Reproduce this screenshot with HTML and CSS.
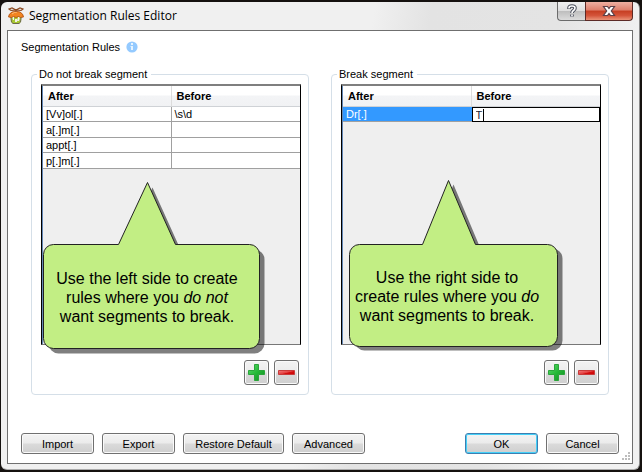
FILE: index.html
```html
<!DOCTYPE html>
<html lang="en">
<head>
<meta charset="utf-8">
<title>Segmentation Rules Editor</title>
<link rel="stylesheet" href="styles.css">
</head>
<body>
<div class="window">
  <header class="titlebar">
    <svg class="app-icon" width="16" height="18" viewBox="0 0 16 18" aria-hidden="true">
      <path d="M3 8h10v4q0 4-2 4.500H5q-2-.5-2-4.500z" fill="#a8c832" stroke="#6d6a4a"/>
      <path d="M4 9h2v4H5zM10 10h2l-1 4h-2zM7 12h2v3H7z" fill="#f3f3e6"/>
      <path d="M.5 10q0-3 3.500-5 4-1.500 8 0 3.500 2 3.500 5l-3 .5-2-1-2.500 1-2.500-1-2 1z" fill="#f28420" stroke="#a84c10" stroke-width=".8"/>
      <path d="M4 7q2-2 5-2" stroke="#ffc078" fill="none"/>
      <path d="M8 3L4 1 1 2l2 1.500M8 3l4-2 3 1-2 1.500M3 3.500l5-.5 5 .5M8 2v3" stroke="#8c4a22" fill="none" stroke-width="1.2"/>
    </svg>
    <h1 class="title">Segmentation Rules Editor</h1>
    <div class="window-controls">
      <button class="control help" type="button" aria-label="Help">
        <svg width="12" height="14" viewBox="0 0 12 14" aria-hidden="true">
          <path d="M3 5V4q0-2 3-2t3 2q0 1.500-1.500 2.500T6 9M6 10.500v2" fill="none" stroke="#4b4f5c" stroke-width="3.600"/>
          <path d="M3 4.500V4q0-2 3-2t3 2q0 1.500-1.500 2.500T6 9M6 10.500v1.700" fill="none" stroke="#fff" stroke-width="1.600"/>
        </svg>
      </button>
      <button class="control close" type="button" aria-label="Close">
        <svg width="14" height="12" viewBox="0 0 14 12" aria-hidden="true">
          <path d="M1.500 1.500h4L7 3.500l1.500-2h4L9.300 6l3.200 4.500h-4L7 8.500l-1.500 2h-4L4.700 6z" fill="#fff" stroke="#5a4048" stroke-width="1.200"/>
        </svg>
      </button>
    </div>
  </header>

  <main class="client">
    <div class="heading">
      <h2 class="heading-text">Segmentation Rules</h2>
      <svg width="12" height="12" viewBox="0 0 12 12" role="img" aria-label="Information">
        <circle cx="6" cy="6" r="5.600" fill="#94caff"/>
        <path d="M5 2h2v2H5zM4.500 5H7v4h-2V6h-.5z" fill="#e6f4ff"/>
      </svg>
    </div>

    <div class="groups">
      <fieldset class="group">
        <legend>Do not break segment</legend>
        <div class="grid">
          <table>
            <thead><tr><th scope="col">After</th><th scope="col">Before</th></tr></thead>
            <tbody>
              <tr><td>[Vv]ol[.]</td><td>\s\d</td></tr>
              <tr><td>a[.]m[.]</td><td></td></tr>
              <tr><td>appt[.]</td><td></td></tr>
              <tr><td>p[.]m[.]</td><td></td></tr>
            </tbody>
          </table>
          <div class="callout callout-left">
            <svg class="bubble" width="222" height="173" viewBox="0 0 222 173" aria-hidden="true">
              <path class="shadow" transform="translate(5 5)" d="M10.500 62.500H75.500L104.500.5L132.500 62.500H206.500a10 10 0 0 1 10 10V156.500a10 10 0 0 1-10 10H10.500a10 10 0 0 1-10-10V72.500a10 10 0 0 1 10-10z"/>
              <path class="shape" d="M10.500 62.500H75.500L104.500.5L132.500 62.500H206.500a10 10 0 0 1 10 10V156.500a10 10 0 0 1-10 10H10.500a10 10 0 0 1-10-10V72.500a10 10 0 0 1 10-10z"/>
            </svg>
            <p>Use the left side to create<br>rules where you <em>do not</em><br>want segments to break.</p>
          </div>
        </div>
        <div class="row-actions">
          <button class="button square" type="button" aria-label="Add rule">
            <svg width="19" height="19" viewBox="0 0 19 19" aria-hidden="true"><defs><linearGradient id="green" x2="1" y2="1"><stop offset="0" stop-color="#5fdc70"/><stop offset=".5" stop-color="#25b937"/><stop offset="1" stop-color="#128c22"/></linearGradient></defs><path d="M7.500 1.500h4v6h6v4h-6v6h-4v-6h-6v-4h6z" fill="url(#green)" stroke="#2ba53a"/></svg>
          </button>
          <button class="button square" type="button" aria-label="Remove rule">
            <svg width="19" height="19" viewBox="0 0 19 19" aria-hidden="true"><defs><linearGradient id="red" x2="1" y2="1"><stop offset="0" stop-color="#f58080"/><stop offset=".5" stop-color="#e34040"/><stop offset=".6" stop-color="#d41111"/><stop offset="1" stop-color="#c00"/></linearGradient></defs><path d="M1.500 7.500h16v4h-16z" fill="url(#red)" stroke="#c83c3c"/></svg>
          </button>
        </div>
      </fieldset>

      <fieldset class="group">
        <legend>Break segment</legend>
        <div class="grid">
          <table>
            <thead><tr><th scope="col">After</th><th scope="col">Before</th></tr></thead>
            <tbody>
              <tr><td class="selected">Dr[.]</td><td class="editing"><input type="text" value="T" aria-label="Before"><span class="caret"></span></td></tr>
            </tbody>
          </table>
          <div class="callout callout-right">
            <svg class="bubble" width="214" height="172" viewBox="0 0 214 172" aria-hidden="true">
              <path class="shadow" transform="translate(5 4)" d="M10.500 64.500H73.500L99.500.5L126.500 64.500H198.500a10 10 0 0 1 10 10V156.500a10 10 0 0 1-10 10H10.500a10 10 0 0 1-10-10V74.500a10 10 0 0 1 10-10z"/>
              <path class="shape" d="M10.500 64.500H73.500L99.500.5L126.500 64.500H198.500a10 10 0 0 1 10 10V156.500a10 10 0 0 1-10 10H10.500a10 10 0 0 1-10-10V74.500a10 10 0 0 1 10-10z"/>
            </svg>
            <p>Use the right side to<br>create rules where you <em>do</em><br>want segments to break.</p>
          </div>
        </div>
        <div class="row-actions">
          <button class="button square" type="button" aria-label="Add rule">
            <svg width="19" height="19" viewBox="0 0 19 19" aria-hidden="true"><path d="M7.500 1.500h4v6h6v4h-6v6h-4v-6h-6v-4h6z" fill="url(#green)" stroke="#2ba53a"/></svg>
          </button>
          <button class="button square" type="button" aria-label="Remove rule">
            <svg width="19" height="19" viewBox="0 0 19 19" aria-hidden="true"><path d="M1.500 7.500h16v4h-16z" fill="url(#red)" stroke="#c83c3c"/></svg>
          </button>
        </div>
      </fieldset>
    </div>

    <footer class="footer">
      <button class="button" type="button">Import</button>
      <button class="button" type="button">Export</button>
      <button class="button wide" type="button">Restore Default</button>
      <button class="button" type="button">Advanced</button>
      <button class="button default" type="button">OK</button>
      <button class="button" type="button">Cancel</button>
    </footer>
    <svg class="grip" width="9" height="9" viewBox="0 0 9 9" aria-hidden="true">
      <path d="M6 0h2v2H6zM3 3h2v2H3zM6 3h2v2H6zM0 6h2v2H0zM3 6h2v2H3zM6 6h2v2H6z" fill="#bdbdbd"/>
    </svg>
  </main>
</div>
</body>
</html>
```
FILE: styles.css
```css
* {
  box-sizing: border-box;
}

body {
  margin: 0;
  min-height: 100vh;
  display: flex;
  padding: 2px 2px 2px 1px;
  background: #15110f;
  color: #000;
  font: 11px/14px "Liberation Sans", Arial, sans-serif;
}

h1, h2, p {
  margin: 0;
  font-weight: normal;
}

.window {
  flex: 1;
  display: flex;
  flex-direction: column;
  padding: 0 6px 5px;
  border: 0 solid #777;
  border-right: 1px solid #8a8a8a;
  border-bottom: 1px solid #aaa;
  border-radius: 6px;
  background: linear-gradient(100deg, #f0f0f0 52%, #e3e3e3 60%, #e4e4e4 78%, #f1f1f1 90%);
}

.titlebar {
  display: flex;
  align-items: flex-start;
  height: 28px;
}

.app-icon {
  margin: 5px 0 0 1px;
}

.title {
  margin: 5px 0 0 5px;
  font: 12px/18px "Open Sans", "Noto Sans", sans-serif;
}

.window-controls {
  display: flex;
  margin-left: auto;
}

.control {
  display: flex;
  align-items: center;
  justify-content: center;
  height: 19px;
  padding: 0;
  border: 1px solid #6b6b6b;
  border-top: 0;
}

.help {
  width: 28px;
  border-right: 0;
  border-radius: 0 0 0 4px;
  background: linear-gradient(#f0f0f0, #dedede 48%, #bdbdbd 50%, #dcdcdc);
}

.close {
  width: 48px;
  border-color: #5c2a26;
  border-radius: 0 0 4px 0;
  background: linear-gradient(#eeb0a2, #de7f6c 45%, #c63e22 50%, #d4543a 75%, #e99378);
}

.client {
  position: relative;
  flex: 1;
  display: flex;
  flex-direction: column;
  padding: 9px 13px 9px;
  border: 1px solid #6f6f6f;
  background: #fff;
}

.heading {
  display: flex;
  align-items: center;
  gap: 6px;
}

.heading-text {
  font-size: 11px;
}

.groups {
  flex: 1;
  display: flex;
  gap: 22px;
  margin: 13px 10px 38px;
}

.group {
  flex: 1;
  display: flex;
  flex-direction: column;
  min-width: 0;
  margin: 0;
  padding: 3px 7px 9px 9px;
  border: 1px solid #d5dfe8;
  border-radius: 4px;
}

.group legend {
  margin-left: -4px;
  padding: 0 4px 0 2px;
}

.grid {
  position: relative;
  flex: 1;
  border: 1px solid #000;
  border-top: 2px solid #7f7f7f;
  border-bottom-color: #777;
  background: #efefef;
  box-shadow: inset 1px 0 #6387b5;
}

table {
  width: calc(100% - 1px);
  margin-left: 1px;
  table-layout: fixed;
  border-collapse: separate;
  border-spacing: 0;
}

th {
  height: 21px;
  padding: 0 0 0 5px;
  border-right: 1px solid #dcdcdc;
  border-bottom: 1px solid #cfd2d6;
  background: linear-gradient(#fff 45%, #f3f4f6 50%, #f1f2f4);
  text-align: left;
}

td {
  height: 15px;
  padding: 0 0 0 3px;
  border-right: 1px solid #a0a0a0;
  border-bottom: 1px solid #a0a0a0;
  background: #fff;
}

tr:nth-child(even) td {
  height: 16px;
}

th:last-child,
td:last-child {
  border-right: 0;
}

.selected {
  border-right: 0;
  background: #3399ff;
  color: #fff;
}

.editing {
  display: flex;
  align-items: center;
  border: 1px solid #000;
}

td.editing:last-child {
  border: 1px solid #000;
}

.editing input {
  width: 7px;
  height: 12px;
  padding: 0;
  border: 0;
  outline: 0;
  background: transparent;
  color: #223;
  font: inherit;
}

.caret {
  width: 1px;
  height: 12px;
  background: #000;
}

.callout {
  position: absolute;
  z-index: 1;
  font-size: 16px;
  line-height: 19px;
  text-align: center;
  white-space: nowrap;
}

.callout-left {
  top: 96px;
  left: 1px;
  width: 216px;
}

.callout-right {
  top: 94px;
  left: 7px;
  width: 208px;
}

.callout p {
  position: relative;
  padding: 87px 8px 0 0;
}

.callout-right p {
  padding: 88px 12px 0 0;
}

.bubble {
  position: absolute;
  top: 0;
  left: 0;
}

.shadow {
  fill: #000;
  fill-opacity: .5;
}

.shape {
  fill: #c2ee84;
  stroke: #222;
}

.row-actions {
  display: flex;
  justify-content: flex-end;
  gap: 5px;
  margin: 15px 2px 0 0;
}

.button {
  width: 73px;
  height: 21px;
  padding: 0;
  border: 1px solid #707070;
  border-radius: 3px;
  background: linear-gradient(#f3f3f3, #ebebeb 48%, #dadada 52%, #cfcfcf);
  box-shadow: inset 0 0 0 1px #fafafa;
  color: #000;
  font: inherit;
}

.square {
  display: flex;
  align-items: center;
  justify-content: center;
  width: 25px;
  height: 25px;
}

.wide {
  width: 101px;
}

.default {
  margin-left: auto;
  border-color: #3c7fb1;
  box-shadow: inset 0 0 0 1px #45d0f8;
}

.footer {
  display: flex;
  gap: 8px;
}

.grip {
  position: absolute;
  right: 1px;
  bottom: 2px;
}
```
